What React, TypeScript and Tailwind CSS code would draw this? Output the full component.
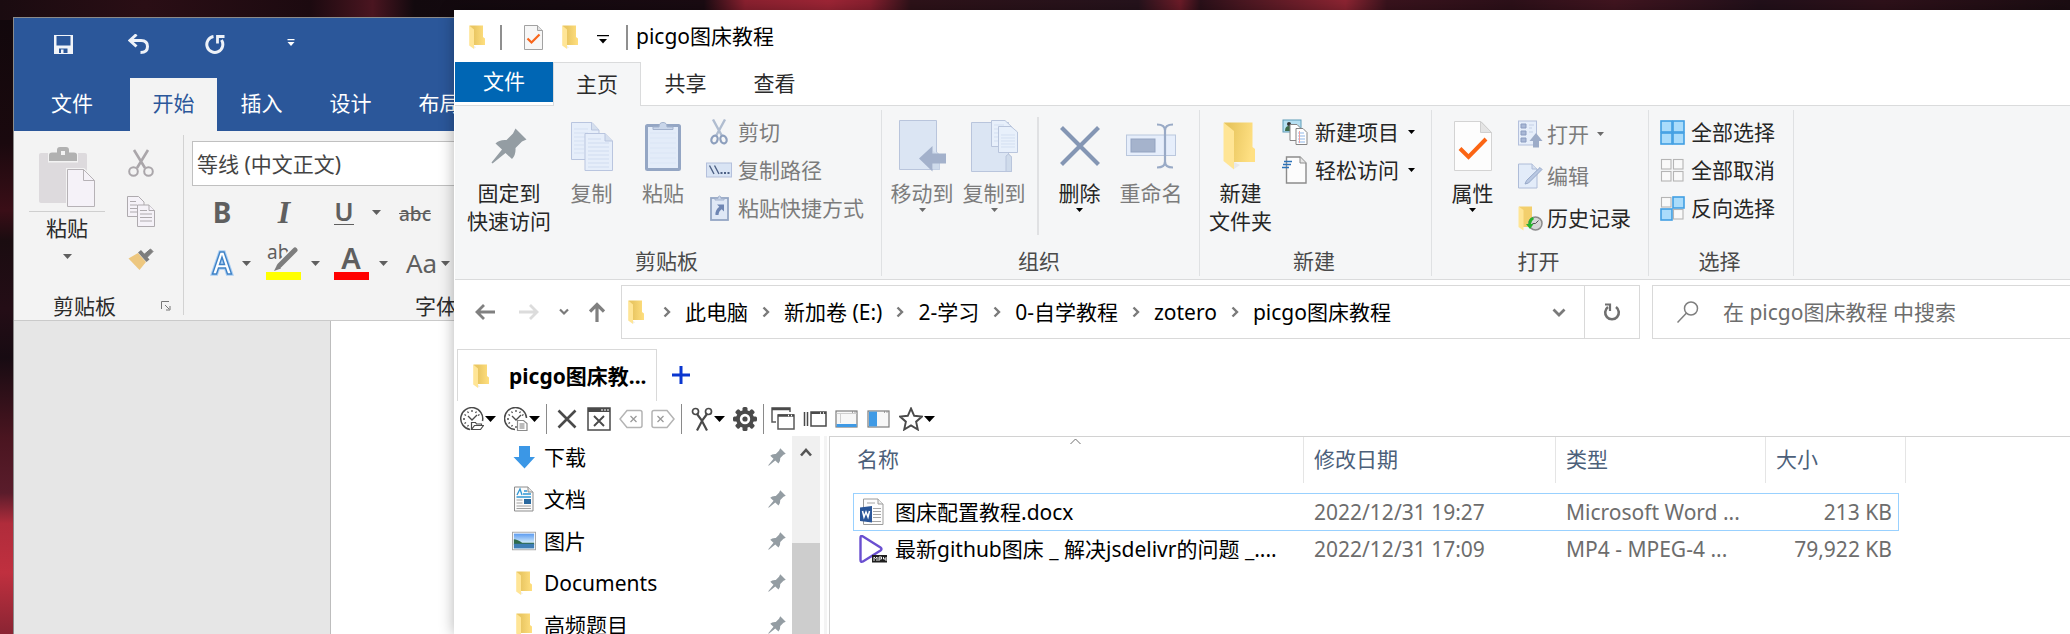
import React from "react";
import type { ReactNode } from "react";

type IconProps = { className?: string };

function Caret({ className = "w-[7px] h-1 fill-black" }: IconProps) {
  return (
    <svg viewBox="0 0 8 4" preserveAspectRatio="none" className={`shrink-0 ${className}`}>
      <path d="M0 0h8L4 4z" />
    </svg>
  );
}

function Folder({ className = "w-[17px] h-6" }: IconProps) {
  return (
    <svg viewBox="0 0 17 24" className={`shrink-0 ${className}`}>
      <defs>
        <linearGradient id="folderBack" x1="0" y1="0" x2="1" y2="0">
          <stop offset="0.3" stopColor="#eac763" />
          <stop offset="1" stopColor="#ffdf7f" />
        </linearGradient>
      </defs>
      <path d="M0.5 0.5H14V12l2 1.5V20H5z" fill="url(#folderBack)" />
      <path d="M0.2 0.5L5 4.5V24L0.2 20.5z" fill="#ffe596" />
      <path d="M5 20.5L7 22.5 5 23.8z" fill="#eee" />
    </svg>
  );
}

function PinBig({ className = "w-9 h-9" }: IconProps) {
  return (
    <svg viewBox="0 0 36 36" className={`shrink-0 ${className}`} fill="#949da3">
      <path d="M24.5 0.5L35.5 11.5 31 13.5 24.5 20Q25 27 21 31L14.5 25 1.5 35.5 0.5 34.5 11 21.5 4.500 15.500Q8 11.500 15.500 12L22 5.500z" />
    </svg>
  );
}

function CopyPages({ className = "w-[42px] h-[49px]" }: IconProps) {
  return (
    <svg viewBox="0 0 42 49" className={className} stroke="#b9c5df" fill="#e6eefa">
      <path d="M0.500 0.500H21L28 8V37.500H0.500z" />
      <path d="M20.500 0.500V8H28" fill="#d5dfee" />
      <path d="M3 7h14M3 11h14M3 15h12M3 19h10M3 23h10M3 27h10M3 31h10" stroke="#d5e0f2" />
      <path d="M14 11.500H34L41.500 19V48.500H14z" />
      <path d="M34 11.500V19H41.500" fill="#d5dfee" />
      <path d="M17 17h13M17 21h21M17 25h21M17 29h21M17 33h21M17 37h21M17 41h21M17 45h21" stroke="#d0dcf0" />
    </svg>
  );
}

function ClipboardBig({ className = "w-9 h-[50px]" }: IconProps) {
  return (
    <svg viewBox="0 0 36 50" className={className}>
      <rect x="1.500" y="4.500" width="33" height="44" rx="1" fill="#e3ecf9" stroke="#94a6c4" strokeWidth="3" />
      <path d="M8 8.500h20V6h-6q0-4.500-4-4.500T14 6H8z" fill="#c9d6ea" stroke="#a3b2cd" />
      <path d="M5 12h26M5 17h26M5 22h26M5 27h26M5 32h26M5 37h26M5 42h26" stroke="#dae5f5" />
    </svg>
  );
}

function ScissorsBlue() {
  return (
    <svg viewBox="0 0 18 26" className="w-[18px] h-[26px]" fill="none">
      <path d="M3 0.500L12 17M15 0.500L6 17" stroke="#b0bdd0" strokeWidth="2.400" />
      <ellipse cx="4.500" cy="20.500" rx="3" ry="4" transform="rotate(20 4.500 20.500)" stroke="#8d9fbd" strokeWidth="2.200" />
      <ellipse cx="13.500" cy="20.500" rx="3" ry="4" transform="rotate(-20 13.500 20.500)" stroke="#8d9fbd" strokeWidth="2.200" />
    </svg>
  );
}

function CopyPath() {
  return (
    <svg viewBox="0 0 26 16" className="w-[26px] h-4">
      <rect x="0.500" y="1" width="25" height="14" fill="#d9e4f4" stroke="#b4c0dc" />
      <path d="M3.500 3.500L8 12M8.500 3.500L13 12" stroke="#4d6185" strokeWidth="1.400" />
      <path d="M14.500 11h2M18 11h2M21.500 11h2" stroke="#4d6185" strokeWidth="1.800" />
    </svg>
  );
}

function PasteShortcut() {
  return (
    <svg viewBox="0 0 19 26" className="w-[19px] h-[26px]">
      <rect x="1" y="3" width="17" height="22" fill="#dfe8f6" stroke="#94a6c4" strokeWidth="1.800" />
      <path d="M5 5h9V3.500h-3q0-2.500-1.500-2.500T8 3.500H5z" fill="#c9d6ea" stroke="#a3b2cd" />
      <path d="M7 9.500h7v7l-2.300-2.300Q8.500 16.500 8.500 20H5.500Q5 15 9.300 11.800z" fill="#6f86b3" />
    </svg>
  );
}

function MoveTo() {
  return (
    <svg viewBox="0 0 47 52" className="w-[47px] h-[52px]">
      <path d="M0.500 0.500H37.500V32l3 3V49.500H0.500z" fill="#dbe5f3" stroke="#b9c5dc" />
      <path d="M34 31l6.500 4.500v14H34z" fill="#cfdbeb" />
      <path d="M20 38.500L33.500 26v7.500H47v10H33.500V51.500z" fill="#a3b1cb" />
    </svg>
  );
}

function CopyTo() {
  return (
    <svg viewBox="0 0 47 52" className="w-[47px] h-[52px]" stroke="#b9c5dc">
      <path d="M0.500 2.500H37.500V34l3 3V51.500H0.500z" fill="#dbe5f3" />
      <path d="M35 51.500V36l2.500-2 3 3V51.500z" fill="#cfdbeb" />
      <path d="M20.500 0.500H34L41 7V26.500H20.500z" fill="#e8f0fb" />
      <path d="M27.500 6.500H40L46.500 12V32.500H27.500z" fill="#e8f0fb" />
      <path d="M30 15h14M30 18h14M30 21h14M30 24h14M30 27h14M23 5h10M23 9h4M23 13h4M23 17h4M23 21h4" stroke="#d3dff1" />
    </svg>
  );
}

function DeleteX() {
  return (
    <svg viewBox="0 0 40 40" className="w-10 h-10">
      <path d="M1.500 1.500l37 37M38.500 1.500l-37 37" stroke="#8496b4" strokeWidth="4.200" />
    </svg>
  );
}

function Rename() {
  return (
    <svg viewBox="0 0 50 46" className="w-[50px] h-[46px]">
      <rect x="0.500" y="12" width="49" height="20.500" fill="#e6eefb" stroke="#bac7dd" />
      <rect x="5" y="16" width="24" height="13" fill="#a5b3cc" stroke="#93a3c1" />
      <path d="M31 1.500q8 0 8 6v31q0 6-8 6M47 1.500q-8 0-8 6v31q0 6 8 6" fill="none" stroke="#99aac6" strokeWidth="2.200" />
    </svg>
  );
}

function FolderBig() {
  return (
    <svg viewBox="0 0 36 48" className="w-9 h-12">
      <defs>
        <linearGradient id="folderBigBack" x1="0" y1="0" x2="1" y2="0.200">
          <stop offset="0.200" stopColor="#e8c65f" />
          <stop offset="1" stopColor="#ffe083" />
        </linearGradient>
      </defs>
      <path d="M11 40L17 43 11 47z" fill="#e9e9e9" />
      <path d="M1 0.500H29.500V25l2.500 2V40H9z" fill="url(#folderBigBack)" />
      <path d="M0.500 0.500L11 9V47.500L0.500 39z" fill="#ffe595" />
    </svg>
  );
}

function NewItem() {
  return (
    <svg viewBox="0 0 26 26" className="w-[26px] h-[26px]">
      <rect x="1" y="1" width="18" height="12" fill="#b7e0f2" stroke="#5f9cb8" />
      <circle cx="7" cy="5" r="2" fill="#333" />
      <path d="M3 12q0-5 4-5t4 5z" fill="#3e6b4a" />
      <path d="M8 5.500h7l3 3V21.500H8z" fill="#fff" stroke="#858585" />
      <path d="M14 9.500h7l4 4V25.500H14z" fill="#fff" stroke="#858585" />
      <path d="M16 14h6M16 17h7M16 20h7M16 23h7" stroke="#8fb7e8" />
      <path d="M17.500 12v12" stroke="#f0a0a0" />
    </svg>
  );
}

function EasyAccess() {
  return (
    <svg viewBox="0 0 26 28" className="w-[26px] h-7">
      <path d="M4.500 1H18l6 6V27H4.500z" fill="#fcfcfc" stroke="#8c8c8c" strokeWidth="1.400" />
      <path d="M18 1v6h6" fill="#e6e6e6" stroke="#8c8c8c" />
      <path d="M2 5.500h8M1 8.500h8M0 11.500h7" stroke="#2c72b8" strokeWidth="1.700" />
    </svg>
  );
}

function Properties({ className = "w-[38px] h-[50px]" }: IconProps) {
  return (
    <svg viewBox="0 0 38 50" className={className}>
      <path d="M0.500 0.500H27L37.500 11.500V49.500H0.500z" fill="#fdfdfd" stroke="#d3d3d3" />
      <path d="M26.500 0.500V11.500H37.500z" fill="#e4e4e4" stroke="#cfcfcf" />
      <path d="M6 27.500L14.500 36 32 18" fill="none" stroke="#fb6514" strokeWidth="4" />
    </svg>
  );
}

function PropertiesSmall() {
  return (
    <svg viewBox="0 0 19 25" className="w-[19px] h-[25px]">
      <path d="M0.500 0.500H13.500L18.500 5.500V24.500H0.500z" fill="#f7f7f7" stroke="#a2a2a2" />
      <path d="M13.500 0.500V5.500H18.500" fill="#e2e2e2" stroke="#a2a2a2" />
      <path d="M3.500 13.500L7.500 17.500 15.500 9.500" fill="none" stroke="#f8661c" strokeWidth="2.200" />
    </svg>
  );
}

function OpenIcon() {
  return (
    <svg viewBox="0 0 26 28" className="w-[26px] h-7">
      <rect x="1.500" y="1" width="18" height="24" fill="#e6eefa" stroke="#b4c0dc" />
      <path d="M4 4h5v4H4zM4 11h5v4H4zM4 18h5v4H4z" fill="#a9b8d6" stroke="#8b9cc0" />
      <path d="M12 5h5M12 12h4M12 8h3" stroke="#c4d0e6" />
      <path d="M19 13l6.500 8H22v6.500h-6V21h-3.500z" fill="#9dacc8" />
    </svg>
  );
}

function EditIcon() {
  return (
    <svg viewBox="0 0 26 26" className="w-[26px] h-[26px]">
      <path d="M1.500 1H15l5 5V25H1.500z" fill="#e3ecf9" stroke="#aebcd8" />
      <path d="M15 1v5h5" fill="#d5dfee" stroke="#aebcd8" />
      <path d="M8 21L9.500 17.500 23 4.500l2 2L11.500 20z" fill="#b9c8e2" stroke="#97a9c9" />
    </svg>
  );
}

function HistoryIcon() {
  return (
    <svg viewBox="0 0 26 26" className="w-[26px] h-[26px]">
      <path d="M2 1.500H15V14l1.500 1V22H6z" fill="#f3cf6c" />
      <path d="M1.500 1.500L6.500 5V25.500L1.500 22z" fill="#ffe595" />
      <circle cx="18.500" cy="18.500" r="6.500" fill="#d6d6d6" stroke="#8a8a8a" strokeWidth="1.500" />
      <path d="M18.500 18.500l3-3M18.500 18.500h-3" stroke="#555" />
      <path d="M15.500 12q-4.500 2-4 7H9l4 5 3.500-5H14q0-3 3-5z" fill="#27b12d" />
    </svg>
  );
}

type Tone = "on" | "off";
function SelectGrid({ cells }: { cells: Tone[] }) {
  const spots = [[1, 1], [13, 1], [1, 13], [13, 13]];
  return (
    <svg viewBox="0 0 25 25" className="w-[25px] h-[25px]">
      {cells.map((tone, i) => (
        <rect
          key={i}
          x={tone === "on" ? spots[i][0] : spots[i][0] + 0.5}
          y={tone === "on" ? spots[i][1] : spots[i][1] + 0.5}
          width={tone === "on" ? 11 : 9.5}
          height={tone === "on" ? 11 : 9.5}
          fill={tone === "on" ? "#aadcfb" : "#f9f9f9"}
          stroke={tone === "on" ? "#419fe3" : "#b5b5b5"}
          strokeWidth={tone === "on" ? 1.6 : 1.1}
        />
      ))}
    </svg>
  );
}

function BigButton({ icon, lines, width, dim, caret }: { icon: ReactNode; lines: string[]; width: string; dim?: boolean; caret?: boolean }) {
  return (
    <button type="button" className={`flex shrink-0 flex-col items-center pt-[11px] ${width} ${dim ? "text-[#7c7c7c]" : "text-[#262626]"}`}>
      <span className="mb-2 flex h-[50px] items-center justify-center">{icon}</span>
      {lines.map((line) => (
        <span key={line} className="whitespace-nowrap">{line}</span>
      ))}
      {caret && <Caret className={dim ? "mt-px w-[7px] h-1 fill-[#6b6b6b]" : "mt-px w-[7px] h-1 fill-black"} />}
    </button>
  );
}

function SmallButton({ icon, label, dim, caret, height = "h-[38px]", gap = "gap-1.5" }: { icon: ReactNode; label: string; dim?: boolean; caret?: boolean; height?: string; gap?: string }) {
  return (
    <button type="button" className={`flex items-center whitespace-nowrap ${height} ${gap} ${dim ? "text-[#7c7c7c]" : "text-[#262626]"}`}>
      <span className="flex w-[26px] justify-center">{icon}</span>
      {label}
      {caret && <Caret className={dim ? "ml-1 w-[7px] h-1 fill-[#6b6b6b]" : "ml-0.5 w-[7px] h-1 fill-black"} />}
    </button>
  );
}

function Group({ label, width, children }: { label: string; width: string; children: ReactNode }) {
  return (
    <section aria-label={label} className={`flex shrink-0 flex-col border-r border-[#dfe1e3] ${width}`}>
      <div className="flex h-[137px] items-start">{children}</div>
      <div className="pr-[3px] text-center text-[#4a4a4a]">{label}</div>
    </section>
  );
}

function Ribbon() {
  return (
    <div className="flex h-[175px] shrink-0 border-y border-[#dadbdc] bg-[#f5f6f7] pt-1 pb-[3px]">
      <Group label="剪贴板" width="w-[427px]">
        <span className="w-1.5" />
        <BigButton icon={<PinBig />} lines={["固定到", "快速访问"]} width="w-24" />
        <BigButton icon={<CopyPages />} lines={["复制"]} width="w-[69px]" dim />
        <BigButton icon={<ClipboardBig />} lines={["粘贴"]} width="w-[74px]" dim />
        <div className="flex flex-col pt-[3px] pl-1.5">
          <SmallButton icon={<ScissorsBlue />} label="剪切" dim />
          <SmallButton icon={<CopyPath />} label="复制路径" dim />
          <SmallButton icon={<PasteShortcut />} label="粘贴快捷方式" dim />
        </div>
      </Group>
      <Group label="组织" width="w-[318px]">
        <span className="w-1" />
        <BigButton icon={<MoveTo />} lines={["移动到"]} width="w-[72px]" dim caret />
        <BigButton icon={<CopyTo />} lines={["复制到"]} width="w-[72px]" dim caret />
        <span className="mt-[7px] mr-[5px] ml-[7px] h-[118px] w-0.5 bg-[#e0e1e3]" />
        <BigButton icon={<DeleteX />} lines={["删除"]} width="w-[71px]" caret />
        <BigButton icon={<Rename />} lines={["重命名"]} width="w-[72px]" dim />
      </Group>
      <Group label="新建" width="w-[232px]">
        <span className="w-1" />
        <BigButton icon={<FolderBig />} lines={["新建", "文件夹"]} width="w-[73px]" />
        <div className="flex flex-col pt-[3px] pl-[5px]">
          <SmallButton icon={<NewItem />} label="新建项目" gap="gap-[7px]" caret />
          <SmallButton icon={<EasyAccess />} label="轻松访问" gap="gap-[7px]" caret />
        </div>
      </Group>
      <Group label="打开" width="w-[217px]">
        <span className="w-1" />
        <BigButton icon={<Properties />} lines={["属性"]} width="w-[73px]" caret />
        <div className="flex flex-col pt-[3px] pl-2">
          <SmallButton icon={<OpenIcon />} label="打开" dim caret height="h-[42px]" gap="gap-1" />
          <SmallButton icon={<EditIcon />} label="编辑" dim height="h-[42px]" gap="gap-1" />
          <SmallButton icon={<HistoryIcon />} label="历史记录" height="h-[42px]" gap="gap-1" />
        </div>
      </Group>
      <Group label="选择" width="w-[145px]">
        <div className="flex flex-col pt-[3px] pl-2.5">
          <SmallButton icon={<SelectGrid cells={["on", "on", "on", "on"]} />} label="全部选择" />
          <SmallButton icon={<SelectGrid cells={["off", "off", "off", "off"]} />} label="全部取消" />
          <SmallButton icon={<SelectGrid cells={["off", "on", "on", "off"]} />} label="反向选择" />
        </div>
      </Group>
    </div>
  );
}

function Chevron({ className }: IconProps) {
  return (
    <svg viewBox="0 0 8 12" className={`h-3 w-2 shrink-0 ${className ?? ""}`} fill="none">
      <path d="M1.500 1.500L6 6l-4.500 4.500" stroke="#7a7a7a" strokeWidth="2.400" />
    </svg>
  );
}

function AddressRow() {
  const crumbs = ["此电脑", "新加卷 (E:)", "2-学习", "0-自学教程", "zotero", "picgo图床教程"];
  return (
    <div className="flex h-16 shrink-0 items-center">
      <nav aria-label="导航" className="flex w-[166px] shrink-0 items-center pl-5">
        <button type="button" aria-label="后退">
          <svg viewBox="0 0 20 16" className="h-4 w-5" fill="none" stroke="#808080" strokeWidth="2.800">
            <path d="M20 8H2M9 1L2 8l7 7" />
          </svg>
        </button>
        <button type="button" aria-label="前进" className="ml-6">
          <svg viewBox="0 0 20 16" className="h-4 w-5" fill="none" stroke="#dcdcdc" strokeWidth="2.800">
            <path d="M0 8h18M11 1l7 7-7 7" />
          </svg>
        </button>
        <button type="button" aria-label="最近位置" className="ml-5">
          <svg viewBox="0 0 10 8" className="h-2 w-2.5" fill="none" stroke="#7a7a7a" strokeWidth="2.200">
            <path d="M1 1.500l4 4 4-4" />
          </svg>
        </button>
        <button type="button" aria-label="上移" className="ml-5">
          <svg viewBox="0 0 16 20" className="h-5 w-4" fill="none" stroke="#808080" strokeWidth="3.200">
            <path d="M8 20V2.500M1 9.500L8 2.500l7 7" />
          </svg>
        </button>
      </nav>
      <div className="flex h-[54px] min-w-0 flex-1 border border-[#d9d9d9]">
        <div className="flex min-w-0 flex-1 items-center overflow-hidden pl-1.5">
          <Folder />
          {crumbs.map((crumb, i) => (
            <React.Fragment key={crumb}>
              <Chevron className={i === 0 ? "ml-[18px]" : "ml-3.5"} />
              <a href="#" className="ml-3.5 whitespace-nowrap">{crumb}</a>
            </React.Fragment>
          ))}
        </div>
        <button type="button" aria-label="展开地址" className="flex w-[51px] items-center justify-center">
          <svg viewBox="0 0 14 9" className="h-[9px] w-3.5" fill="none" stroke="#7a7a7a" strokeWidth="2.800">
            <path d="M1.500 1.500L7 7l5.500-5.500" />
          </svg>
        </button>
        <button type="button" aria-label="刷新" className="flex w-[55px] items-center justify-center border-l border-[#d9d9d9]">
          <svg viewBox="0 0 18 18" className="h-[18px] w-[18px]" fill="none" stroke="#707070" strokeWidth="2.600">
            <path d="M13 4A6.800 6.800 0 1 1 5 4" />
            <path d="M2 1.500h5V8" strokeWidth="2.200" />
          </svg>
        </button>
      </div>
      <label className="ml-3 flex h-[54px] w-[418px] shrink-0 items-center border border-r-0 border-[#d9d9d9] pl-6">
        <svg viewBox="0 0 22 22" className="h-[22px] w-[22px] shrink-0" fill="none" stroke="#7f7f7f" strokeWidth="1.500">
          <circle cx="14" cy="7.500" r="6.500" />
          <path d="M9.500 12L0.500 21.500" />
        </svg>
        <input type="search" aria-label="搜索" placeholder="在 picgo图床教程 中搜索" className="ml-6 min-w-0 flex-1 bg-transparent outline-none placeholder:text-[#6d6d6d] placeholder:opacity-100" />
      </label>
    </div>
  );
}

function Tool({ label, className = "", children }: { label: string; className?: string; children: ReactNode }) {
  return (
    <button type="button" aria-label={label} className={`flex shrink-0 items-center ${className}`}>
      <svg viewBox="0 0 24 24" className="h-6 w-6" fill="none" stroke="#4a4a4a" strokeWidth="1.500">
        {children}
      </svg>
    </button>
  );
}

const toolCaret = "w-[11px] h-[6px] fill-black";

function ClockTicks() {
  return <path d="M12 3v2M12 19v2M3 12h2M7.500 4.500l1 1.500M16.500 4.500l-1 1.500M4.500 7.500l1.500 1M19.500 7.500l-1.500 1M4.500 16.500l1.500-1M7.500 19.500l1-1.500M8 9l4 4 5-5" strokeWidth="1.300" />;
}

function Toolbar() {
  return (
    <div role="toolbar" className="flex h-[35px] shrink-0 items-center pl-[5px]">
      <Tool label="最近文件夹">
        <path d="M10 22.500A11 11 0 1 1 22.500 14" />
        <ClockTicks />
        <path d="M11.500 22.500V15.500h4l1 1.500h5v1.500M11.500 22.500l3-4h9l-3 4z" fill="#fff" strokeWidth="1.200" />
      </Tool>
      <Caret className={`ml-px ${toolCaret}`} />
      <Tool label="最近文件" className="ml-2">
        <path d="M11 22.500A11 11 0 1 1 22.500 11" />
        <ClockTicks />
        <path d="M13.500 13.500h6l3.500 3V23.500h-9.500z" fill="#fff" stroke="#8a8a8a" strokeWidth="1.200" />
        <path d="M15.500 17h5M15.500 19h5M15.500 21h5" strokeWidth="1" stroke="#777" />
      </Tool>
      <Caret className={`ml-px ${toolCaret}`} />
      <span className="ml-1.5 h-[30px] w-px bg-[#8a8a8a]" />
      <Tool label="删除" className="ml-2">
        <path d="M3.500 3.500l17 17M20.500 3.500l-17 17" strokeWidth="2.600" />
      </Tool>
      <Tool label="关闭窗口" className="ml-2">
        <rect x="1" y="1" width="22" height="22" />
        <path d="M1 3h22" strokeWidth="4" />
        <path d="M14 3h2M17 3h2M20 3h2" stroke="#fff" strokeWidth="1.200" />
        <path d="M7 9l10 10M17 9L7 19" strokeWidth="1.900" />
      </Tool>
      <Tool label="关闭左侧标签" className="ml-2">
        <path d="M8 3.500h13q2 0 2 2v13q0 2-2 2H8l-7-8.500z" stroke="#b4b4b4" />
        <path d="M11.500 9l6 6M17.500 9l-6 6" stroke="#9a9a9a" strokeWidth="1.300" />
      </Tool>
      <Tool label="关闭右侧标签" className="ml-2">
        <path d="M16 3.500H3q-2 0-2 2v13q0 2 2 2h13l7-8.500z" stroke="#b4b4b4" />
        <path d="M6.500 9l6 6M12.500 9l-6 6" stroke="#9a9a9a" strokeWidth="1.300" />
      </Tool>
      <span className="ml-1.5 h-[30px] w-px bg-[#8a8a8a]" />
      <Tool label="剪切" className="ml-2">
        <circle cx="5.500" cy="4.500" r="3" strokeWidth="1.700" />
        <circle cx="18.500" cy="4.500" r="3" strokeWidth="1.700" />
        <path d="M7 7l4.500 6 5.500 10.500M17 7l-4.500 6L7 23.500" strokeWidth="2.200" />
      </Tool>
      <Caret className={toolCaret} />
      <Tool label="设置" className="ml-2">
        <g fill="#4a4a4a" stroke="none">
          <rect x="9.500" y="0" width="5" height="24" rx="1.500" />
          <rect x="9.500" y="0" width="5" height="24" rx="1.500" transform="rotate(45 12 12)" />
          <rect x="9.500" y="0" width="5" height="24" rx="1.500" transform="rotate(90 12 12)" />
          <rect x="9.500" y="0" width="5" height="24" rx="1.500" transform="rotate(135 12 12)" />
          <circle cx="12" cy="12" r="9" />
        </g>
        <circle cx="12" cy="12" r="5.200" fill="#fff" stroke="none" />
        <circle cx="12" cy="12" r="2.600" fill="#4a4a4a" stroke="none" />
      </Tool>
      <span className="ml-1.5 h-[30px] w-px bg-[#8a8a8a]" />
      <Tool label="层叠窗口" className="ml-[7px]">
        <path d="M5 15H1V1h18v4" stroke="#5a5a5a" />
        <path d="M1 2h18" strokeWidth="2.500" />
        <rect x="7" y="8" width="16" height="14" stroke="#5a5a5a" fill="#fff" />
        <path d="M7 8.500h16" strokeWidth="2.500" />
        <path d="M17 8.500h1M20 8.500h1" stroke="#fff" />
      </Tool>
      <Tool label="窗口列表" className="ml-2">
        <path d="M1.500 5v14M4.500 5v14" />
        <rect x="8" y="5" width="15" height="14" />
        <path d="M8 6h15" strokeWidth="2" />
        <path d="M17 6h1M20 6h1" stroke="#fff" />
      </Tool>
      <Tool label="底部面板" className="ml-2">
        <rect x="1" y="4" width="21" height="16" stroke="#7d7d7d" fill="#f7f7f7" strokeWidth="1.200" />
        <path d="M1.600 6.500h20M5.500 6v10" stroke="#cfcfcf" strokeWidth="1" />
        <path d="M1.600 18.500h20" stroke="#3f9ae5" strokeWidth="3" />
        <path d="M17 5h1M19.500 5h1" stroke="#888" />
      </Tool>
      <Tool label="左侧面板" className="ml-2">
        <rect x="1" y="4" width="21" height="16" stroke="#7d7d7d" fill="#f7f7f7" strokeWidth="1.200" />
        <path d="M2 4.600h8V19.400H2z" fill="#3f9ae5" stroke="none" />
        <path d="M17 5h1M19.500 5h1" stroke="#888" />
      </Tool>
      <Tool label="收藏" className="ml-2">
        <path d="M12 1.500l3.200 7.300 7.800 0.700-5.900 5.200 1.700 7.800L12 18.400 5.200 22.500l1.700-7.800L1 9.500l7.800-0.700z" strokeWidth="1.900" />
      </Tool>
      <Caret className={`ml-px ${toolCaret}`} />
    </div>
  );
}

function PinSmall() {
  return <PinBig className="h-[18px] w-[18px]" />;
}

function DownloadIcon() {
  return (
    <svg viewBox="0 0 24 24" className="h-6 w-6">
      <path d="M7 1h11v11h5L12.500 23.500 1.500 12H7z" fill="#3b97e6" />
    </svg>
  );
}

function DocumentIcon() {
  return (
    <svg viewBox="0 0 24 26" className="h-[26px] w-6">
      <path d="M2.500 1H16l5 5v19H2.500z" fill="#fbfbfb" stroke="#8d8d8d" />
      <path d="M16 1v5h5" fill="#e5e5e5" stroke="#8d8d8d" />
      <path d="M5 9l3-6 2 6M12 5h3M11 8h8M4.500 11h14.500" stroke="#3197d3" strokeWidth="1.300" fill="none" />
      <rect x="12" y="13" width="7" height="5" fill="#2a699f" />
      <path d="M4.500 14h6M4.500 17h6M4.500 20h14.500M4.500 22.500h14.500" stroke="#a0a0a0" />
    </svg>
  );
}

function PictureIcon() {
  return (
    <svg viewBox="0 0 26 20" className="h-5 w-6">
      <defs>
        <linearGradient id="sky" x1="0" y1="0" x2="0" y2="1">
          <stop offset="0" stopColor="#5b9bf0" />
          <stop offset="0.600" stopColor="#cfe9fb" />
        </linearGradient>
      </defs>
      <rect x="0.500" y="0.500" width="25" height="19" fill="#fff" stroke="#a3a3a3" />
      <rect x="2" y="2" width="22" height="16" fill="url(#sky)" />
      <path d="M2 8q4 0 9 4h13v2H2z" fill="#2f6b4b" />
      <path d="M2 13h22v5H2z" fill="#3e7db4" />
    </svg>
  );
}

function Tree() {
  const items: { label: string; icon: ReactNode }[] = [
    { label: "下载", icon: <DownloadIcon /> },
    { label: "文档", icon: <DocumentIcon /> },
    { label: "图片", icon: <PictureIcon /> },
    { label: "Documents", icon: <Folder /> },
    { label: "高频题目", icon: <Folder /> },
  ];
  return (
    <div className="flex w-[374px] shrink-0 overflow-hidden">
      <ul className="min-w-0 flex-1">
        {items.map((item) => (
          <li key={item.label} className="flex h-[42px] items-center pr-1.5 pl-[57px]">
            <span className="mr-2 flex w-6 justify-center">{item.icon}</span>
            <a href="#" className="flex-1">{item.label}</a>
            <PinSmall />
          </li>
        ))}
      </ul>
      <div className="flex w-7 shrink-0 flex-col bg-[#f0f0f0]">
        <button type="button" aria-label="向上滚动" className="flex h-[107px] items-start justify-center pt-3">
          <svg viewBox="0 0 12 9" className="h-[9px] w-3" fill="none" stroke="#555" strokeWidth="2.600">
            <path d="M1 7.500l5-5.500 5 5.500" />
          </svg>
        </button>
        <div className="flex-1 bg-[#cdcdcd]" />
      </div>
      <div className="ml-1 w-[3px] bg-[#f4f4f4]" />
      <div className="w-0.5" />
    </div>
  );
}

function WordFile() {
  return (
    <svg viewBox="0 0 26 28" className="h-7 w-[26px]">
      <path d="M4.500 1H19l5 5v20.500H4.500z" fill="#fdfdfd" stroke="#9b9b9b" />
      <path d="M19 1v5h5" fill="#eee" stroke="#9b9b9b" />
      <path d="M8 5h8M14 10.500h8M14 13.500h8M14 16.500h8M14 19.500h8M8 23.500h14" stroke="#a5a5a5" />
      <path d="M1 9.500L13 8V24.500L1 23z" fill="#2a5699" />
      <path d="M3.500 13l1.500 6L7 14l2 5 1.500-6" fill="none" stroke="#fff" strokeWidth="1.500" />
    </svg>
  );
}

function VideoFile() {
  return (
    <svg viewBox="0 0 28 28" className="h-7 w-7">
      <path d="M1.500 3q0-3 2.500-1.500L21.500 12.500q2 1.500 0 3L4 26.500q-2.500 1-2.500-1.500z" fill="#fff" stroke="#6a4fd0" strokeWidth="2.400" />
      <rect x="13" y="20" width="15" height="7.500" fill="#1e1e1e" />
      <path d="M15 26v-4l1.500 1.500L18 22v4M20 26v-4h2.500v2H20M24.500 22v2h2.500M27 22v4" fill="none" stroke="#fff" strokeWidth="0.900" />
    </svg>
  );
}

function FileList() {
  const columns = [
    { label: "名称", width: "w-[474px]", pad: "pl-[27px]" },
    { label: "修改日期", width: "w-[252px]", pad: "pl-2.5" },
    { label: "类型", width: "w-[210px]", pad: "pl-2.5" },
    { label: "大小", width: "w-[140px]", pad: "pl-2.5" },
  ];
  const files = [
    { name: "图床配置教程.docx", date: "2022/12/31 19:27", type: "Microsoft Word ...", size: "213 KB", icon: <WordFile />, selected: true },
    { name: "最新github图床 _ 解决jsdelivr的问题 _....", date: "2022/12/31 17:09", type: "MP4 - MPEG-4 ...", size: "79,922 KB", icon: <VideoFile />, selected: false },
  ];
  return (
    <div className="min-w-0 flex-1 overflow-hidden border-t border-l border-[#d2d2d2]">
      <table className="w-[1076px] table-fixed">
        <thead>
          <tr>
            {columns.map((column, i) => (
              <th key={column.label} className={`relative h-14 p-0 align-top font-normal ${column.width}`}>
                <div className={`flex h-[46px] items-center border-r border-[#e5e5e5] pb-0.5 text-[#4c607a] ${column.pad}`}>{column.label}</div>
                {i === 0 && (
                  <svg viewBox="0 0 11 7" className="absolute top-px left-60 h-[7px] w-[11px]" fill="none" stroke="#6f6f6f">
                    <path d="M0.500 6l5-5 5 5" />
                  </svg>
                )}
              </th>
            ))}
          </tr>
        </thead>
        <tbody className="text-[#6d6d6d]">
          {files.map((file) => (
            <tr key={file.name} className="relative h-[37px]">
              <td className="p-0 pl-[29px]">
                {file.selected && <span className="absolute inset-y-0 right-[7px] left-[23px] -mb-px border border-[#99d1ff]" />}
                <div className="flex items-center text-black">
                  <span className="flex w-9 shrink-0">{file.icon}</span>
                  <span className="whitespace-nowrap">{file.name}</span>
                </div>
              </td>
              <td className="p-0 pl-2.5 whitespace-nowrap">{file.date}</td>
              <td className="p-0 pl-2.5 whitespace-nowrap">{file.type}</td>
              <td className="p-0 pr-3.5 text-right whitespace-nowrap">{file.size}</td>
            </tr>
          ))}
        </tbody>
      </table>
    </div>
  );
}

function Explorer() {
  return (
    <main className="absolute top-2.5 right-0 bottom-0 left-[454px] flex flex-col overflow-hidden bg-white pl-px text-black shadow-[0_0_14px_rgba(0,0,0,0.3)]">
      <header className="flex h-[52px] shrink-0 items-center pl-3.5 pt-0.5">
        <Folder />
        <span className="ml-3.5 h-[25px] w-0.5 bg-[#8f8f8f]" />
        <button type="button" aria-label="属性" className="ml-[22px]"><PropertiesSmall /></button>
        <button type="button" aria-label="新建文件夹" className="ml-[19px]"><Folder /></button>
        <button type="button" aria-label="自定义快速访问工具栏" className="ml-[18px] pt-1">
          <svg viewBox="0 0 12 9" className="h-[9px] w-3"><path d="M0 0.500h12" stroke="#000" strokeWidth="1.500" /><path d="M2 4h8l-4 4.500z" /></svg>
        </button>
        <span className="ml-[17px] h-[25px] w-0.5 bg-[#8f8f8f]" />
        <h1 className="ml-2 pb-0.5 whitespace-nowrap">picgo图床教程</h1>
      </header>
      <div role="tablist" className="relative z-10 -mb-px flex h-11 shrink-0 items-start text-[#2b2b2b]">
        <button type="button" role="tab" className="h-10 w-[98px] bg-[#0066b4] pb-0.5 text-white">文件</button>
        <button type="button" role="tab" aria-selected="true" className="h-11 w-[88px] border border-b-0 border-[#dadbdc] bg-[#f5f6f7] pb-0.5">主页</button>
        <button type="button" role="tab" className="h-11 w-[89px] pb-0.5">共享</button>
        <button type="button" role="tab" className="h-11 w-[89px] pb-0.5">查看</button>
      </div>
      <Ribbon />
      <AddressRow />
      <div className="flex h-[57px] shrink-0 items-end pl-0.5">
        <div className="flex h-[52px] w-[200px] items-center border border-b-0 border-[#d9d9d9] pl-[15px] font-bold">
          <Folder />
          <span className="ml-[19px] whitespace-nowrap">picgo图床教...</span>
        </div>
        <button type="button" aria-label="新建标签" className="flex h-[52px] items-center pl-[15px]">
          <svg viewBox="0 0 18 18" className="h-[18px] w-[18px]"><path d="M9 0v18M0 9h18" stroke="#0a36cf" strokeWidth="3" /></svg>
        </button>
      </div>
      <Toolbar />
      <div className="flex min-h-0 flex-1">
        <Tree />
        <FileList />
      </div>
    </main>
  );
}

const wordCaret = "w-[9px] h-[5px] fill-[#5f5f5f]";

function Word() {
  return (
    <section aria-label="Word" className="absolute top-[17px] bottom-0 left-[13px] flex w-[675px] flex-col overflow-hidden border-t border-l border-[#8b8b8b] bg-[#e6e6e6] text-[#2b2b2b]">
      <header className="flex h-[60px] shrink-0 items-center bg-[#2b579a] pb-2 pl-[11px]">
        <button type="button" aria-label="保存" className="flex w-[76px] justify-center">
          <svg viewBox="0 0 19 19" className="h-[19px] w-[19px]">
            <path d="M0 0h19v19H0z" fill="#f1f4f9" />
            <path d="M2.500 1h14v9.500h-14zM5 13.500h8.500V18H5z" fill="#2b579a" />
            <path d="M7 14.500h2.500V18H7z" fill="#f1f4f9" />
          </svg>
        </button>
        <button type="button" aria-label="撤消" className="flex w-[76px] justify-center">
          <svg viewBox="0 0 22 20" className="h-5 w-[22px]" fill="none" stroke="#eef2f8" strokeWidth="3">
            <path d="M8.500 0.500L2 6.500l6.500 6M2 6.500h11q6.500 0 6.500 6t-7 6" />
          </svg>
        </button>
        <button type="button" aria-label="重复" className="flex w-[76px] justify-center">
          <svg viewBox="0 0 20 20" className="h-5 w-5" fill="none" stroke="#eef2f8" strokeWidth="3">
            <path d="M8.500 2.500A8 8 0 1 0 16.500 6" />
            <path d="M12.500 9.500V2.500h7" strokeWidth="2.800" />
          </svg>
        </button>
        <button type="button" aria-label="自定义" className="flex w-[76px] justify-center pb-[3px]">
          <svg viewBox="0 0 8 8" className="h-2 w-2" fill="#fff"><path d="M0.500 0h7v1.200h-7zM0.500 3h7L4 7z" /></svg>
        </button>
      </header>
      <div role="tablist" className="flex h-[53px] shrink-0 bg-[#2b579a] text-white">
        <button type="button" role="tab" className="w-[116px] pb-[3px]">文件</button>
        <button type="button" role="tab" aria-selected="true" className="w-[87px] bg-[#f3f3f3] pb-[3px] text-[#2b579a]">开始</button>
        <button type="button" role="tab" className="w-[89px] pb-[3px]">插入</button>
        <button type="button" role="tab" className="w-[89px] pb-[3px]">设计</button>
        <button type="button" role="tab" className="w-[89px] pb-[3px]">布局</button>
      </div>
      <div className="flex h-[190px] shrink-0 border-b border-[#cacaca] bg-[#f3f3f3] pt-1 pb-[5px]">
        <div className="flex w-[170px] shrink-0 flex-col border-r border-[#d2d2d2]">
          <div className="flex h-[153px] shrink-0 pl-[15px]">
            <button type="button" className="flex w-[76px] flex-col items-center pt-3">
              <svg viewBox="0 0 56 60" className="h-[60px] w-14 shrink-0">
                <rect x="0" y="6" width="48" height="50" rx="2" fill="#dddadd" />
                <path d="M9 15.500V6q0-1.500 1.500-1.500H18V1.500Q18 0 20 0h8q2 0 2 1.500v3h7.500Q39 4.500 39 6v9.500z" fill="#f3f3f3" />
                <path d="M10 14V8q0-2.500 3-2.500h5V3q0-3 3-3h6q3 0 3 3v2.500h5q3 0 3 2.500v6z" fill="#b1b1b1" />
                <rect x="22" y="4" width="4" height="4" fill="#f3f3f3" />
                <path d="M27 21H45L57 33V60H27z" fill="#f3f3f3" />
                <path d="M28.500 22.500H44.500L55.500 33.500V59.500H28.500z" fill="#f5f2f8" stroke="#b6b2b6" />
                <path d="M44.500 22.500V33.500H55.500" fill="none" stroke="#b6b2b6" />
              </svg>
              <span className="mt-1 w-full border-t border-[#cfcfcf] pt-0.5">粘贴</span>
              <Caret className="mt-3 w-[9px] h-[5px] fill-[#5f5f5f]" />
            </button>
            <div className="ml-[22px] flex flex-col pt-1">
              <button type="button" aria-label="剪切" className="flex h-12 w-7 items-center justify-center">
                <svg viewBox="0 0 26 28" className="h-7 w-[26px]" fill="none" stroke="#aaa6aa">
                  <path d="M6 1l11 18M20 1L9 19" strokeWidth="2.600" />
                  <circle cx="5.500" cy="22.500" r="4.300" strokeWidth="2" />
                  <circle cx="20.500" cy="22.500" r="4.300" strokeWidth="2" />
                </svg>
              </button>
              <button type="button" aria-label="复制" className="flex h-12 w-7 items-center justify-center">
                <svg viewBox="0 0 28 31" className="h-[31px] w-7" fill="#f5f2f8" stroke="#aeaaae">
                  <path d="M0.500 0.500H11.500L17 6V20.500H0.500z" />
                  <path d="M3 5.500h6M3 9h7M3 12.500h7M3 16h7" />
                  <path d="M10.500 9H22L27.500 14.500V30.500H10.500z" />
                  <path d="M22 9v5.500h5.500M13 14.500h7M13 18h12M13 21.500h12M13 25h12" />
                </svg>
              </button>
              <button type="button" aria-label="格式刷" className="flex h-12 w-7 items-center justify-center">
                <svg viewBox="0 0 26 22" className="h-[22px] w-[26px]">
                  <path d="M0.500 10.500L10 5l8 9-6.500 8z" fill="#edc77f" />
                  <path d="M10 4.500l3-2.500 8.500 9.500-3 2.500z" fill="#7d7d7d" />
                  <path d="M16 6.500L22.500 1l2.500 2.500-6 6z" fill="#7d7d7d" stroke="#7d7d7d" />
                </svg>
              </button>
            </div>
          </div>
          <div className="flex shrink-0 items-center justify-between pt-1 pr-3 pl-[39px]">
            <span>剪贴板</span>
            <button type="button" aria-label="剪贴板选项">
              <svg viewBox="0 0 10 10" className="h-2.5 w-2.5" stroke="#777" fill="none"><path d="M0.500 8V0.500H8M4 4l4 4M9 5v4H5" /></svg>
            </button>
          </div>
        </div>
        <div className="flex min-w-0 flex-1 flex-col">
          <input aria-label="字体" defaultValue="等线 (中文正文)" className="mt-1.5 ml-2 h-[45px] w-80 shrink-0 border border-[#c0c0c0] bg-white px-1 pb-0.5 text-[#444] outline-none" />
          <div className="flex h-[52px] shrink-0 items-center pl-[7px] text-[#5f5f5f]">
            <button type="button" className="w-[62px] text-[28px] font-bold">B</button>
            <button type="button" className="w-[62px] font-['Liberation_Serif',serif] text-[32px] font-bold italic">I</button>
            <button type="button" className="ml-1.5 flex w-[46px] justify-center text-[26px]">
              <span className="border-b border-[#5f5f5f] leading-[25px] font-semibold">U</span>
            </button>
            <button type="button" aria-label="下划线样式" className="flex w-[18px] justify-center"><Caret className={wordCaret} /></button>
            <button type="button" className="w-[60px] pt-1 text-[19px] font-medium line-through">abc</button>
          </div>
          <div className="flex h-[50px] shrink-0 items-center pl-[18px] text-[#5f5f5f]">
            <button type="button" aria-label="文本效果" className="flex w-10 justify-center">
              <svg viewBox="0 0 24 26" className="h-[26px] w-6" fill="none">
                <path d="M2.500 24L10 2h4l7.500 22h-4L15.500 18h-7L6.500 24zM9.500 14.500h5L12 7z" stroke="#a9cdf2" strokeWidth="3.500" />
                <path d="M2.500 24L10 2h4l7.500 22h-4L15.500 18h-7L6.500 24zM9.500 14.500h5L12 7z" stroke="#3f82c6" strokeWidth="1.400" fill="#fff" fillRule="evenodd" />
              </svg>
            </button>
            <Caret className={wordCaret} />
            <button type="button" aria-label="突出显示" className="ml-[15px] w-9">
              <svg viewBox="0 -10 36 56" className="h-14 w-9">
                <text x="1" y="14" fontSize="19" fill="#5f5f5f">ab</text>
                <path d="M8 26l3-6 4 3.500z" fill="#7d7d7d" />
                <path d="M13 21L29 4.500" stroke="#f3f3f3" strokeWidth="8" />
                <path d="M13.500 20.500L29 5" stroke="#7d7d7d" strokeWidth="5" strokeLinecap="round" />
                <path d="M0 27h35v8H0z" fill="#ff0" />
              </svg>
            </button>
            <Caret className={`ml-[9px] ${wordCaret}`} />
            <button type="button" aria-label="字体颜色" className="ml-3.5 w-9">
              <svg viewBox="0 -10 36 56" className="h-14 w-9">
                <text x="17" y="24" fontSize="29" fontWeight="600" textAnchor="middle" fill="#5f5f5f">A</text>
                <path d="M0 27h35v8H0z" fill="#f00" />
              </svg>
            </button>
            <Caret className={`ml-[9px] ${wordCaret}`} />
            <button type="button" className="ml-[18px] flex items-center gap-1 text-[26px]">
              Aa<Caret className={wordCaret} />
            </button>
          </div>
          <div className="pt-1 text-center">字体</div>
        </div>
      </div>
      <div className="ml-[316px] flex-1 border-l border-[#bdbdbd] bg-white" />
    </section>
  );
}

function Wallpaper() {
  return (
    <>
      <div className="absolute inset-x-0 top-0 h-5 bg-[linear-gradient(90deg,#1a0b10_0%,#2a0e15_7%,#1c0a10_15%,#4a1520_18%,#12090e_20%,#1a0b12_34%,#8c2130_36%,#a02636_40%,#8a2030_42%,#2e1219_44%,#26131c_55%,#6e1c29_57%,#2a1019_58%,#4a1721_60%,#8f2533_65%,#3a131d_67%,#2d1019_73%,#421520_78%,#22101a_85%,#2f111a_91%,#1b0d12_100%)]" />
      <div className="absolute top-5 bottom-0 left-0 w-5 bg-[linear-gradient(180deg,#12080c_0%,#1a090e_20%,#3a0e17_31%,#1a0c10_36%,#240d16_47%,#170b12_55%,#4a1520_68%,#5a1c2b_77%,#b02c3b_82%,#c0303f_90%,#8a2433_100%)]" />
    </>
  );
}

export default function App() {
  return (
    <div className="relative h-screen w-full overflow-hidden bg-[#1d0d12] font-['Noto_Sans','Noto_Sans_CJK_SC',sans-serif] text-[21px] leading-7">
      <Wallpaper />
      <Word />
      <Explorer />
    </div>
  );
}
